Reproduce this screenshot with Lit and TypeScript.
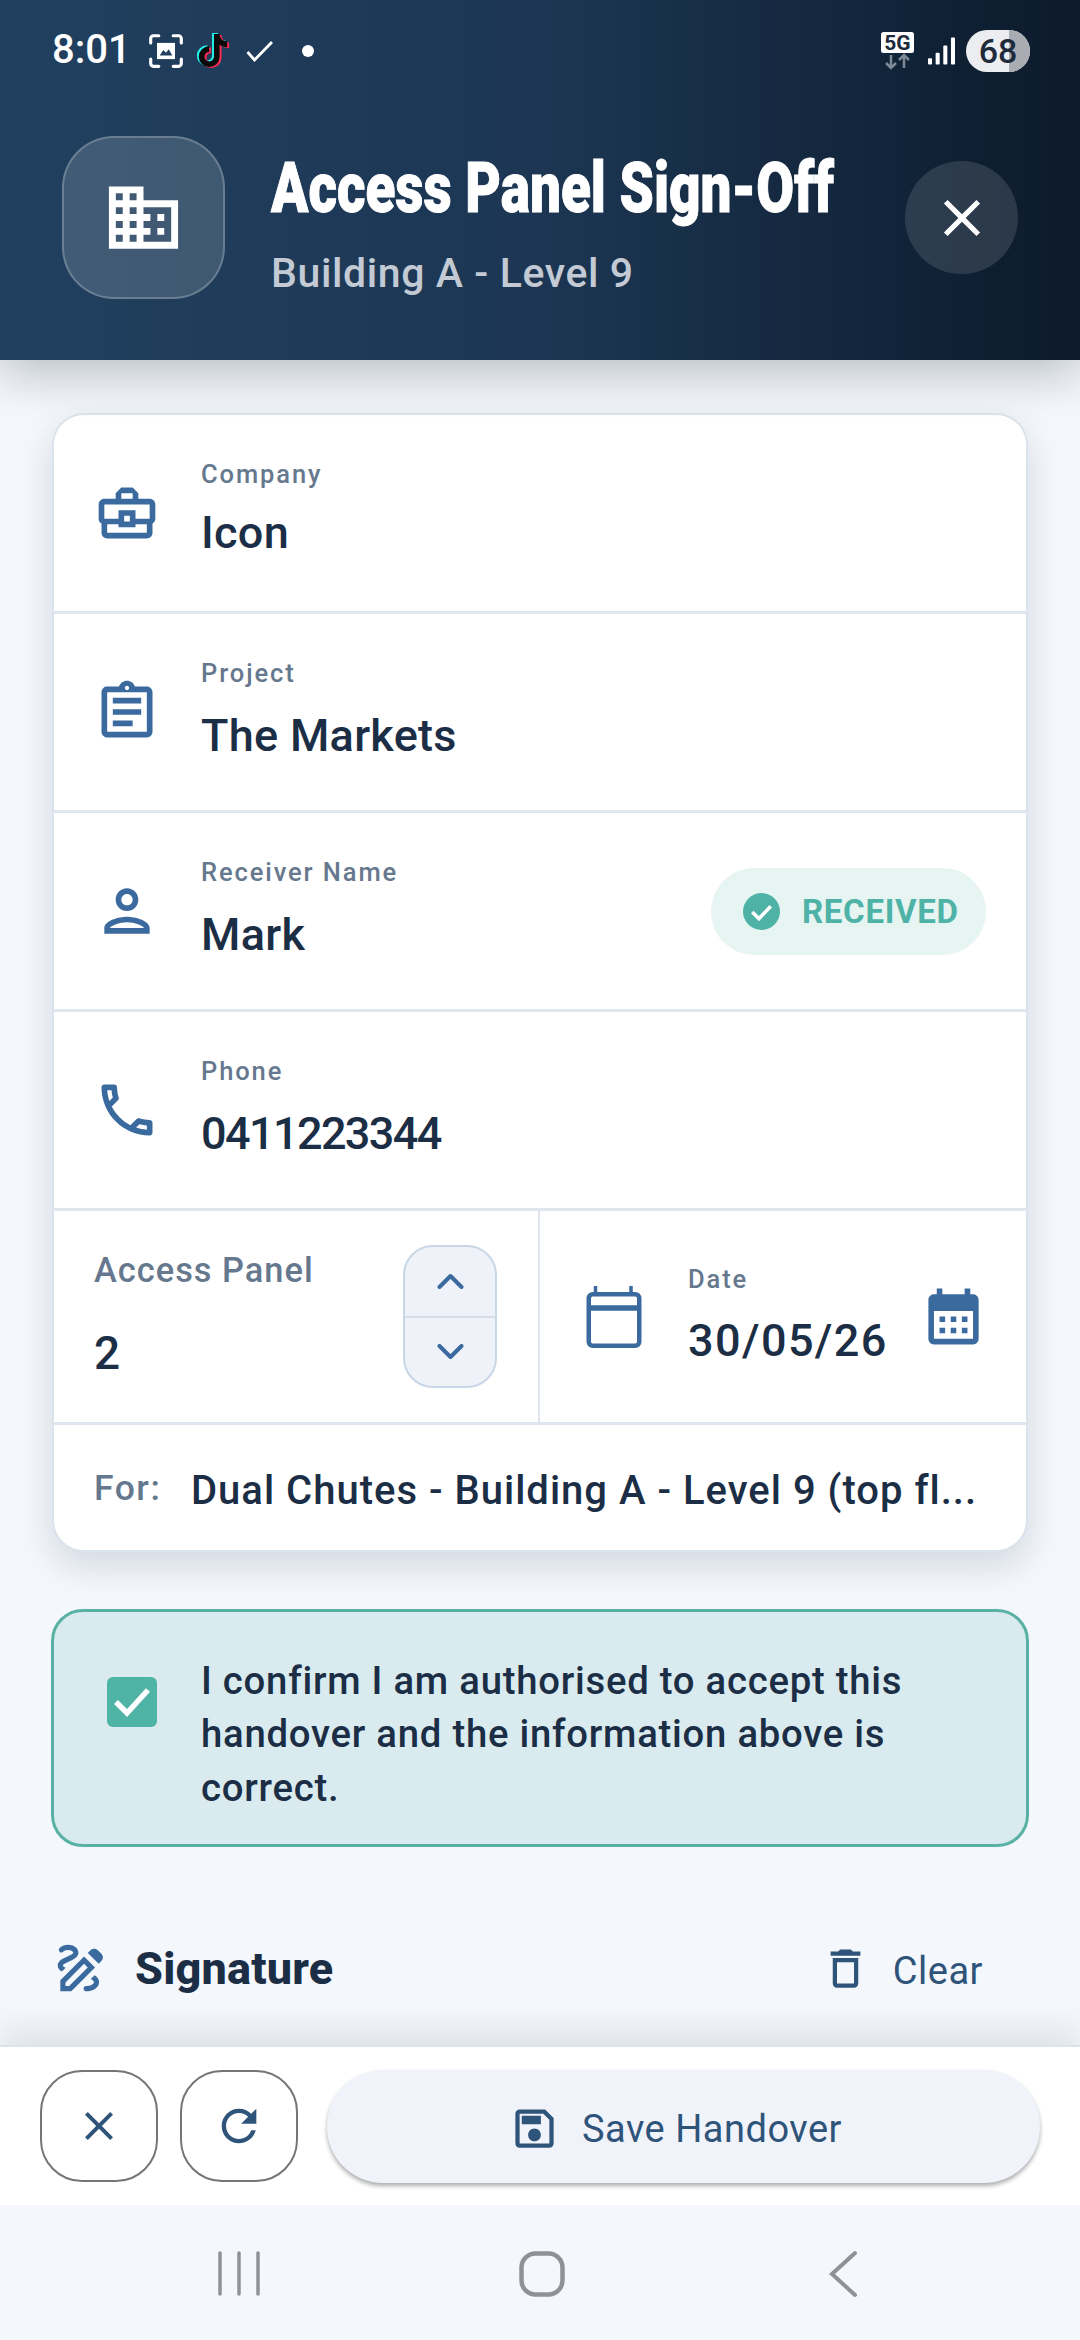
import { LitElement, html, css, svg } from "lit";
import { customElement } from "lit/decorators.js";

const blue = "#3a6a9e";
const navy = "#2f5479";

const P = {
  domain: "M12 7V3H2v18h20V7H12zM6 19H4v-2h2v2zm0-4H4v-2h2v2zm0-4H4V9h2v2zm0-4H4V5h2v2zm4 12H8v-2h2v2zm0-4H8v-2h2v2zm0-4H8V9h2v2zm0-4H8V5h2v2zm10 12h-8v-2h2v-2h-2v-2h2v-2h-2V9h8v10zm-2-8h-2v2h2v-2zm0 4h-2v2h2v-2z",
  close: "M19 6.41L17.59 5 12 10.59 6.41 5 5 6.41 10.59 12 5 17.59 6.41 19 12 13.41 17.59 19 19 17.59 13.41 12z",
  work: "M20 7h-4V5l-2-2h-4L8 5v2H4c-1.1 0-2 .9-2 2v5c0 .75.4 1.38 1 1.73V19c0 1.11.89 2 2 2h14c1.11 0 2-.89 2-2v-3.28c.59-.35 1-.99 1-1.72V9c0-1.1-.9-2-2-2zM10 5h4v2h-4V5zM4 9h16v5h-5v-3H9v3H4V9zm9 6h-2v-2h2v2zm6 4H5v-3h4v1h6v-1h4v3z",
  assign: "M7 15h7v2H7zm0-4h10v2H7zm0-4h10v2H7zm12-4h-4.18C14.4 1.84 13.3 1 12 1c-1.3 0-2.4.84-2.82 2H5c-.14 0-.27.01-.4.04-.39.08-.74.28-1.01.55-.18.18-.33.4-.43.64-.1.23-.16.49-.16.77v14c0 .27.06.54.16.78s.25.45.43.64c.27.27.62.47 1.01.55.13.02.26.03.4.03h14c1.1 0 2-.9 2-2V5c0-1.1-.9-2-2-2zm-7-.25c.41 0 .75.34.75.75s-.34.75-.75.75-.75-.34-.75-.75.34-.75.75-.75zM19 19H5V5h14v14z",
  person: "M12 6c1.1 0 2 .9 2 2s-.9 2-2 2-2-.9-2-2 .9-2 2-2m0 10c2.7 0 5.8 1.29 6 2H6c.23-.72 3.31-2 6-2m0-12C9.79 4 8 5.79 8 8s1.79 4 4 4 4-1.79 4-4-1.79-4-4-4zm0 10c-2.67 0-8 1.34-8 4v2h16v-2c0-2.66-5.33-4-8-4z",
  call: "M6.54 5c.06.89.21 1.76.45 2.59l-1.2 1.2c-.41-1.2-.67-2.47-.76-3.79h1.51m9.86 12.02c.85.24 1.72.39 2.6.45v1.49c-1.32-.09-2.59-.35-3.8-.75l1.2-1.19M7.5 3H4c-.55 0-1 .45-1 1 0 9.39 7.61 17 17 17 .55 0 1-.45 1-1v-3.49c0-.55-.45-1-1-1-1.24 0-2.45-.2-3.57-.57-.1-.04-.21-.05-.31-.05-.26 0-.51.1-.71.29l-2.2 2.2c-2.83-1.45-5.15-3.76-6.59-6.59l2.2-2.2c.28-.28.36-.67.25-1.02C8.7 6.45 8.5 5.25 8.5 4c0-.55-.45-1-1-1z",
  month: "M19 4h-1V2h-2v2H8V2H6v2H5c-1.11 0-1.99.9-1.99 2L3 20c0 1.1.89 2 2 2h14c1.1 0 2-.9 2-2V6c0-1.1-.9-2-2-2zm0 16H5V10h14v10zM9 14H7v-2h2v2zm4 0h-2v-2h2v2zm4 0h-2v-2h2v2zm-8 4H7v-2h2v2zm4 0h-2v-2h2v2zm4 0h-2v-2h2v2z",
  draw: "M18.85 10.39l1.06-1.06c.78-.78.78-2.05 0-2.83L18.5 5.09c-.78-.78-2.05-.78-2.83 0l-1.06 1.06 4.24 4.24zm-4.24 1.42L7.41 19H6v-1.41l7.19-7.19 1.42 1.41zm-1.42-4.25L4 16.76V21h4.24l9.19-9.19-4.24-4.25zM19 17.5c0 2.19-2.54 3.5-5 3.5-.55 0-1-.45-1-1s.45-1 1-1c1.54 0 3-.73 3-1.5 0-.47-.48-.87-1.23-1.2l1.48-1.48c1.07.63 1.75 1.47 1.75 2.68zM4.58 13.35C3.61 12.79 3 12.06 3 11c0-1.8 1.89-2.63 3.56-3.36C7.59 7.18 9 6.56 9 6c0-.41-.78-1-2-1-1.26 0-1.8.61-1.83.64-.35.41-.98.46-1.4.12-.41-.34-.49-.95-.15-1.37C3.73 4.28 4.86 3 7 3s4 1.26 4 3c0 1.87-1.93 2.72-3.64 3.47C6.42 9.88 5 10.5 5 11c0 .31.43.6 1.07.86l-1.49 1.49z",
  del: "M16 9v10H8V9h8m-1.5-6h-5l-1 1H5v2h14V4h-3.5l-1-1zM18 7H6v12c0 1.1.9 2 2 2h8c1.1 0 2-.9 2-2V7z",
  refresh: "M17.65 6.35C16.2 4.9 14.21 4 12 4c-4.42 0-7.99 3.58-7.99 8s3.57 8 7.99 8c3.73 0 6.84-2.55 7.73-6h-2.08c-.82 2.33-3.04 4-5.65 4-3.31 0-6-2.69-6-6s2.69-6 6-6c1.66 0 3.14.69 4.22 1.78L13 11h7V4l-2.35 2.35z",
  save: "M17 3H5c-1.11 0-2 .9-2 2v14c0 1.1.89 2 2 2h14c1.1 0 2-.9 2-2V7l-4-4zm2 16H5V5h11.17L19 7.83V19zm-7-7c-1.66 0-3 1.34-3 3s1.34 3 3 3 3-1.34 3-3-1.34-3-3-3zM6 6h9v4H6z",
};

const TT = "M20 3h6c.5 5 3 7.5 8 8v6c-3 0-6-1-8-2.5V27a11 11 0 1 1-11-11v6a5 5 0 1 0 5 5z";

@customElement("app-root")
export class AppRoot extends LitElement {
  static styles = css`
    :host { display: block; width: 1080px; height: 2340px; background: #f4f7fb; font-family: Roboto, "Noto Sans", sans-serif; color: #1b2e45; overflow: hidden; position: relative; }
    * { box-sizing: border-box; }
    svg { display: block; flex: none; }
    .hdr { height: 360px; background: linear-gradient(90deg, #21405f 0%, #1c3653 50%, #0c1a2b 100%); box-shadow: 0 12px 46px rgba(15,30,50,.27); color: #fff; display: flex; flex-direction: column; position: relative; }
    .status { height: 100px; display: flex; align-items: center; padding: 1px 50px 0 52px; }
    .time { font: 500 40px Roboto, sans-serif; width: 96px; margin-top: -2px; }
    .status .sp { flex: 1; }
    .hrow { display: flex; align-items: flex-start; padding: 36px 62px 0 62px; }
    .hicon { width: 163px; height: 163px; border-radius: 52px; background: rgba(255,255,255,.15); border: 2px solid rgba(255,255,255,.22); display: flex; align-items: center; justify-content: center; flex: none; }
    .htext { flex: 1; margin-left: 46px; min-width: 0; }
    .title { font: 900 70px/72px Roboto, sans-serif; white-space: nowrap; display: inline-block; transform-origin: 0 50%; transform: scaleX(.784); margin-top: 16px; -webkit-text-stroke: 1px #fff; }
    .sub { font: 500 41px/46px Roboto, sans-serif; color: #c3cad4; margin-top: 26px; letter-spacing: .6px; }
    .close { width: 113px; height: 113px; border-radius: 50%; background: rgba(255,255,255,.12); display: flex; align-items: center; justify-content: center; margin-top: 25px; flex: none; }
    .card { margin: 53px 52px 0 52px; background: #fff; border: 2px solid #dbe3ed; border-radius: 32px; box-shadow: 0 14px 34px rgba(30,50,80,.15); overflow: hidden; }
    .row { height: 199px; display: flex; align-items: center; border-bottom: 3px solid #dfe6ef; padding: 0 40px 0 39px; }
    .ric { width: 68px; margin-right: 40px; flex: none; }
    .lab { font: 500 25.5px/30px Roboto, sans-serif; color: #66788e; letter-spacing: 1.9px; }
    .val { font: 500 45px/50px Roboto, sans-serif; color: #1b2e45; margin-top: 23px; letter-spacing: .3px; }
    .val.phone { letter-spacing: -1.6px; }
    .grow { flex: 1; margin-top: -5px; }
    .grow.first { margin-top: -9px; }
    .grow.first .val { margin-top: 19px; }
    .badge { width: 275px; height: 87px; border-radius: 44px; background: #e6f4f2; display: flex; align-items: center; padding-left: 32px; gap: 22px; color: #4eb3a6; font: 700 33px Roboto, sans-serif; letter-spacing: .7px; flex: none; }
    .split { display: flex; height: 214px; border-bottom: 3px solid #dfe6ef; }
    .left { width: 486px; border-right: 2px solid #dfe6ef; display: flex; padding: 0 40px; position: relative; flex: none; }
    .al { font: 500 34.4px/40px Roboto, sans-serif; color: #66788e; letter-spacing: 1px; margin-top: 39px; }
    .an { font: 500 46px/52px Roboto, sans-serif; margin-top: 37px; }
    .step { position: absolute; right: 41px; top: 34px; width: 94px; height: 143px; border: 2px solid #c9d6e5; border-radius: 30px; background: #eff3f9; display: flex; flex-direction: column; }
    .step div { flex: 1; display: flex; align-items: center; justify-content: center; }
    .step div:first-child { border-bottom: 2px solid #d5deea; }
    .right { flex: 1; display: flex; align-items: center; padding: 0 39px 0 41px; }
    .rd { flex: 1; margin-left: 41px; margin-top: -3px; }
    .rd .val { margin-top: 22px; letter-spacing: 1.4px; }
    .for { height: 125px; display: flex; align-items: center; padding: 0 40px; }
    .fl { font: 500 35.5px Roboto, sans-serif; color: #66788e; letter-spacing: 1.5px; width: 97px; flex: none; margin-top: 0; }
    .fv { font: 500 40px Roboto, sans-serif; white-space: nowrap; letter-spacing: 1px; margin-top: 6px; }
    .confirm { margin: 57px 51px 0; height: 238px; border: 3px solid #58b1a4; border-radius: 32px; background: #d9ebef; display: flex; padding: 42px 0 0 53px; }
    .cb { width: 50px; height: 50px; border-radius: 6px; background: #4fb3a6; display: flex; align-items: center; justify-content: center; margin-top: 23px; margin-right: 44px; flex: none; }
    .ct { font: 500 38.3px/53.3px Roboto, sans-serif; letter-spacing: .75px; color: #1b2e45; width: 790px; }
    .sig { display: flex; align-items: center; padding: 0 97px 0 50px; margin-top: 91px; height: 60px; }
    .sig b { font: 800 45px Roboto, sans-serif; margin-left: 23px; flex: 1; letter-spacing: .2px; }
    .clear { font: 400 38px Roboto, sans-serif; color: #2f5479; margin-left: 22px; letter-spacing: .5px; margin-top: 5px; }
    .bar { position: absolute; left: 0; right: 0; top: 2045px; height: 160px; background: #fff; border-top: 2px solid #dbe3ed; box-shadow: 0 -14px 30px rgba(30,50,80,.1); display: flex; align-items: flex-start; padding: 23px 40px 0 40px; }
    .sq { width: 118px; height: 112px; border: 2.5px solid #757575; border-radius: 42px; background: #fff; display: flex; align-items: center; justify-content: center; margin-right: 22px; flex: none; }
    .sq.last { margin-right: 0; }
    .save { width: 713px; height: 113px; margin-left: 29px; padding: 4px 16px 0 0; border-radius: 56px; background: #f1f3fb; box-shadow: 0 3px 4px rgba(0,0,0,.32); display: flex; align-items: center; justify-content: center; gap: 22px; color: #2f5479; font: 400 38px Roboto, sans-serif; letter-spacing: .5px; flex: none; }
    .nav { position: absolute; left: 0; right: 0; top: 2205px; height: 135px; background: #f4f7fb; }
  `;

  private mi(d: string, size: number, color = blue) {
    return html`<svg width=${size} height=${size} viewBox="0 0 24 24" fill=${color}><path d=${d}/></svg>`;
  }

  render() {
    return html`
      <div class="hdr">
        <div class="status">
          <span class="time">8:01</span>
          <svg width="36" height="36" viewBox="0 0 40 40" fill="none" stroke="#fff" stroke-width="3.5" stroke-linecap="round">
            <path d="M3 11V6a3 3 0 0 1 3-3h6M28 3h6a3 3 0 0 1 3 3v5M37 29v5a3 3 0 0 1-3 3h-6M12 37H6a3 3 0 0 1-3-3v-5"/>
            <path d="M10 11h20v18H10z" fill="#fff" stroke="none"/><path d="M13 25l4-6 3 3 3-4 4 7z" fill="#21405f" stroke="none"/>
          </svg>
          <svg width="36" height="40" viewBox="0 0 38 42" style="margin-left:11px">
            <path d=${TT} fill="#25f4ee" transform="translate(-2 -1)"/>
            <path d=${TT} fill="#fe2c55" transform="translate(2 1)"/>
            <path d=${TT} fill="#0a0a0a"/>
          </svg>
          <svg width="27" height="22" viewBox="0 0 27 22" fill="none" stroke="#fff" stroke-width="2.8" style="margin-left:15px"><path d="M1.5 12l7 8L26 2"/></svg>
          <svg width="12" height="12" viewBox="0 0 12 12" style="margin-left:29px"><circle cx="6" cy="6" r="6" fill="#fff"/></svg>
          <span class="sp"></span>
          <svg width="34" height="38" viewBox="0 0 34 38" style="margin-right:13px;overflow:visible">
            <rect x="0" y="0" width="33" height="21" rx="2.5" fill="#fff"/>
            <text x="16.5" y="18" text-anchor="middle" font-family="Roboto" font-weight="700" font-size="21" fill="#1c2a3c">5G</text>
            <path d="M10 23v13M5 31l5 5 5-5M23 36V23M18 28l5-5 5 5" fill="none" stroke="#7f8a98" stroke-width="2.5"/>
          </svg>
          <svg width="27" height="30" viewBox="0 0 30 32" fill="#fff" style="margin-right:11px">
            <rect x="0" y="24" width="4.5" height="7" rx="1"/><rect x="8.5" y="18" width="4.5" height="13" rx="1"/><rect x="17" y="10" width="4.5" height="21" rx="1"/><rect x="25.5" y="1" width="4.5" height="30" rx="1"/>
          </svg>
          <svg width="64" height="42" viewBox="0 0 64 42">
            <rect width="64" height="42" rx="21" fill="#ecedf0"/><path d="M43 0a21 21 0 0 1 0 42z" fill="#a9acb2"/>
            <text x="32" y="33" text-anchor="middle" font-family="Roboto" font-weight="500" font-size="34" fill="#1c2a3c">68</text>
          </svg>
        </div>
        <div class="hrow">
          <div class="hicon">${this.mi(P.domain, 83, "#fff")}</div>
          <div class="htext">
            <div class="title">Access Panel Sign-Off</div>
            <div class="sub">Building A - Level 9</div>
          </div>
          <div class="close">${this.mi(P.close, 62, "#fff")}</div>
        </div>
      </div>

      <div class="card">
        <div class="row">
          <div class="ric">${this.mi(P.work, 68)}</div>
          <div class="grow first"><div class="lab">Company</div><div class="val">Icon</div></div>
        </div>
        <div class="row">
          <div class="ric">${this.mi(P.assign, 68)}</div>
          <div class="grow"><div class="lab">Project</div><div class="val">The Markets</div></div>
        </div>
        <div class="row">
          <div class="ric">${this.mi(P.person, 68)}</div>
          <div class="grow"><div class="lab">Receiver Name</div><div class="val">Mark</div></div>
          <div class="badge">
            <svg width="37" height="37" viewBox="0 0 36 36"><circle cx="18" cy="18" r="18" fill="#4eb3a6"/><path d="M9 18.5l6.5 6.5L27 13" fill="none" stroke="#fff" stroke-width="3.5"/></svg>
            RECEIVED
          </div>
        </div>
        <div class="row">
          <div class="ric">${this.mi(P.call, 68)}</div>
          <div class="grow"><div class="lab">Phone</div><div class="val phone">0411223344</div></div>
        </div>
        <div class="split">
          <div class="left">
            <div><div class="al">Access Panel</div><div class="an">2</div></div>
            <div class="step">
              <div><svg width="27" height="16" viewBox="0 0 27 16" fill="none" stroke=${blue} stroke-width="4" stroke-linecap="round" stroke-linejoin="round">${svg`<path d="M2.5 14L13.5 3l11 11"/>`}</svg></div>
              <div><svg width="27" height="16" viewBox="0 0 27 16" fill="none" stroke=${blue} stroke-width="4" stroke-linecap="round" stroke-linejoin="round">${svg`<path d="M2.5 2l11 11 11-11"/>`}</svg></div>
            </div>
          </div>
          <div class="right">
            <svg width="66" height="66" viewBox="0 0 66 66" fill="none" stroke=${blue} stroke-width="4.5">
              <rect x="7.75" y="10.25" width="50.5" height="51.5" rx="4"/><path d="M6 24h54" stroke-width="5.5"/><path d="M14.5 2v8M50 2v8" stroke-width="3.5"/>
            </svg>
            <div class="rd"><div class="lab">Date</div><div class="val">30/05/26</div></div>
            ${this.mi(P.month, 67)}
          </div>
        </div>
        <div class="for">
          <span class="fl">For:</span>
          <span class="fv">Dual Chutes - Building A - Level 9 (top fl...</span>
        </div>
      </div>

      <div class="confirm">
        <div class="cb"><svg width="40" height="30" viewBox="0 0 40 30" fill="none" stroke="#fff" stroke-width="5.5"><path d="M4 15l11 11L36 3"/></svg></div>
        <div class="ct">I confirm I am authorised to accept this handover and the information above is correct.</div>
      </div>

      <div class="sig">
        ${this.mi(P.draw, 62)}
        <b>Signature</b>
        ${this.mi(P.del, 51, navy)}
        <span class="clear">Clear</span>
      </div>

      <div class="bar">
        <div class="sq">${this.mi(P.close, 48, navy)}</div>
        <div class="sq last">${this.mi(P.refresh, 52, navy)}</div>
        <div class="save">
          ${this.mi(P.save, 51, navy)}
          Save Handover
        </div>
      </div>

      <div class="nav">
        <svg width="1080" height="135" viewBox="0 0 1080 135" fill="none" stroke="#8e9296" stroke-linecap="round">
          <path d="M220 48v41M239 48v41M258 48v41" stroke-width="3.5"/>
          <rect x="521.5" y="48.5" width="41" height="41" rx="14" stroke-width="4.5"/>
          <path d="M855 48l-23 21 23 21" stroke-width="4"/>
        </svg>
      </div>
    `;
  }
}
